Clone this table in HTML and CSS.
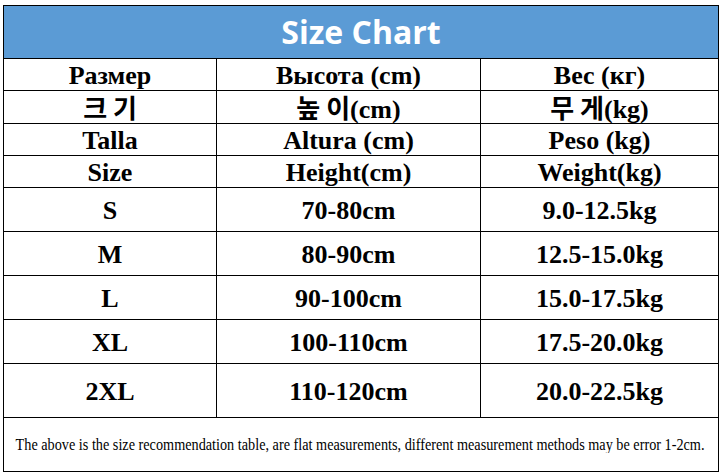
FILE: index.html
```html
<!DOCTYPE html>
<html lang="en">
<head>
<meta charset="utf-8">
<title>Size Chart</title>
<link rel="stylesheet" href="styles.css">
</head>
<body>
<table class="chart">
  <colgroup>
    <col class="c1"><col class="c2"><col class="c3">
  </colgroup>
  <tr class="title-row"><td colspan="3" class="title">Size Chart</td></tr>
  <tr class="hrow"><td>Размер</td><td>Высота (cm)</td><td>Вес (кг)</td></tr>
  <tr class="hrow"><td><span class="ko">크 기</span></td><td><span class="ko">높 이</span><span class="small">(cm)</span></td><td><span class="ko">무 게</span><span class="small">(kg)</span></td></tr>
  <tr class="hrow"><td>Talla</td><td>Altura (cm)</td><td>Peso (kg)</td></tr>
  <tr class="hrow"><td>Size</td><td>Height(cm)</td><td>Weight(kg)</td></tr>
  <tr class="drow"><td>S</td><td>70-80cm</td><td>9.0-12.5kg</td></tr>
  <tr class="drow"><td>M</td><td>80-90cm</td><td>12.5-15.0kg</td></tr>
  <tr class="drow"><td>L</td><td>90-100cm</td><td>15.0-17.5kg</td></tr>
  <tr class="drow"><td>XL</td><td>100-110cm</td><td>17.5-20.0kg</td></tr>
  <tr class="drow tall"><td>2XL</td><td>110-120cm</td><td>20.0-22.5kg</td></tr>
  <tr class="note-row"><td colspan="3" class="note"><div class="note-box"><span class="note-text">The above is the size recommendation table, are flat measurements, different measurement methods may be error 1-2cm.</span></div></td></tr>
</table>
</body>
</html>
```

FILE: styles.css
```css
html, body {
  margin: 0;
  background: #ffffff;
}
body {
  padding: 5px 0 0 3px;
  font-family: "Liberation Serif", "Times New Roman", serif;
  color: #000;
}
.chart {
  border-collapse: collapse;
  table-layout: fixed;
  width: 715px;
}
.c1 { width: 213px; }
.c2 { width: 264px; }
.c3 { width: 238px; }
.chart td {
  border: 1px solid #000;
  padding: 3px 0 0 0;
  text-align: center;
  vertical-align: middle;
  font-weight: bold;
  font-size: 26px;
  line-height: 1;
  white-space: nowrap;
}
.title-row td {
  height: 52px;
}
.chart td.title {
  padding: 0;
  background: #5b9bd5;
  color: #fff;
  font-family: "Open Sans", "Liberation Sans", sans-serif;
  font-weight: 700;
  font-size: 32px;
}
.hrow td { height: 28px; }
.drow td { height: 40px; }
.drow.tall td { height: 50px; }
.ko {
  font-family: "Noto Sans CJK KR", sans-serif;
  font-weight: 700;
  font-size: 26px;
}
.small {
  font-size: 26px;
}
.note-row td { height: 53px; }
.chart td.note {
  padding: 0;
  font-weight: normal;
  font-size: 16px;
}
.note-box {
  width: 713px;
  overflow: hidden;
  display: flex;
  justify-content: center;
}
.note-text {
  flex: none;
  display: block;
  transform: scaleX(0.89);
  transform-origin: center;
}
```
